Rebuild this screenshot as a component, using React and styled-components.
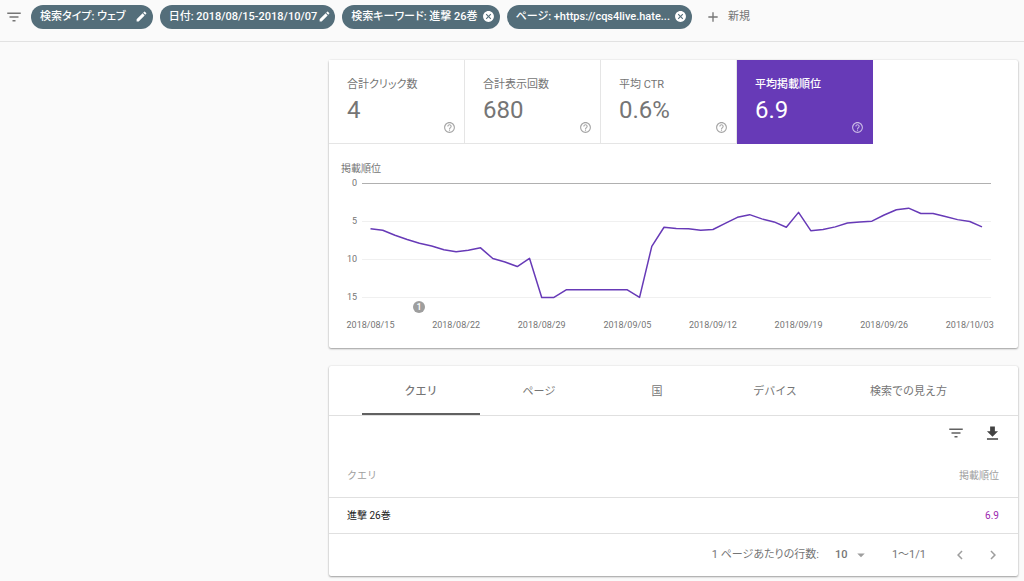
import { useState } from 'react';
import styled, { createGlobalStyle } from 'styled-components';
import {
  MdAdd,
  MdArrowDropDown,
  MdCancel,
  MdChevronLeft,
  MdChevronRight,
  MdEdit,
  MdFileDownload,
  MdFilterList,
  MdHelpOutline,
} from 'react-icons/md';

const GlobalStyle = createGlobalStyle`
  * {
    box-sizing: border-box;
  }
  body {
    margin: 0;
    background: #fafafa;
    color: #757575;
    font-family: Roboto, 'Noto Sans CJK JP', sans-serif;
    font-size: 11px;
    line-height: 16px;
  }
  button, select {
    padding: 0;
    border: 0;
    background: none;
    color: inherit;
    font: inherit;
    cursor: pointer;
  }
`;
const FilterBar = styled.header`
  display: flex;
  align-items: center;
  gap: 7px;
  height: 42px;
  padding: 0 4px 7px 3px;
  border-bottom: 1px solid #e2e2e2;
`;
const IconButton = styled.button`
  display: grid;
  place-items: center;
  flex: none;
  width: ${({ $size }) => $size || 20}px;
  height: ${({ $size }) => $size || 20}px;
  color: ${({ $color }) => $color || 'inherit'};
`;
const Chip = styled.div`
  display: flex;
  align-items: center;
  gap: ${({ $gap }) => $gap}px;
  height: 24px;
  padding: 0 4px 0 9px;
  border-radius: 12px;
  background: #546e7a;
  color: #fff;
  font-weight: 500;
  font-feature-settings: 'palt';
  white-space: nowrap;

  button {
    margin-bottom: 2px;
  }
`;
const NewButton = styled.button`
  display: flex;
  align-items: center;
  gap: 7px;
  margin-left: 6px;
`;
const Main = styled.main`
  display: grid;
  gap: 18px;
  padding: 18px 6px 5px 329px;
`;
const Card = styled.section`
  min-width: 0;
  background: #fff;
  border-radius: 2px;
  box-shadow: 0 1px 2px rgba(0, 0, 0, 0.35), 0 0 2px rgba(0, 0, 0, 0.12);
`;
const Metrics = styled.div`
  display: flex;
`;
const Metric = styled.div`
  position: relative;
  width: 136px;
  height: 84px;
  padding: 17px 18px 0;
  border-right: 1px solid ${({ $active }) => ($active ? '#673ab7' : '#e5e5e5')};
  border-bottom: 1px solid ${({ $active }) => ($active ? '#673ab7' : '#e5e5e5')};
  background: ${({ $active }) => ($active ? '#673ab7' : '#fff')};
  color: ${({ $active }) => ($active ? '#fff' : '#757575')};
  font-weight: ${({ $active }) => ($active ? 500 : 400)};
  font-feature-settings: 'palt';
`;
const MetricValue = styled.div`
  margin-top: 2px;
  font-size: 24px;
  font-weight: 400;
  line-height: 30px;
`;
const HelpButton = styled.button`
  position: absolute;
  right: 8px;
  bottom: 9px;
  display: flex;
  opacity: 0.65;
`;
const ChartSvg = styled.svg`
  display: block;
  width: 100%;
  font-size: 9px;
  fill: #757575;
`;
const Tabs = styled.div`
  display: flex;
  height: 50px;
  padding-left: 33px;
  border-bottom: 1px solid #e0e0e0;
`;
const Tab = styled.button`
  min-width: 118px;
  padding: 4px 36px 0;
  border-bottom: 2px solid ${({ $active }) => ($active ? '#616161' : 'transparent')};
  font-weight: ${({ $active }) => ($active ? 500 : 400)};
  white-space: nowrap;
`;
const TableTools = styled.div`
  display: flex;
  justify-content: flex-end;
  gap: 16px;
  padding: 7px 16px 0;
`;
const Table = styled.table`
  width: 100%;
  border-collapse: collapse;
  font-size: 10px;
`;
const HeadCell = styled.th`
  height: 54px;
  padding: 12px 19px 0 18px;
  border-bottom: 1px solid #e0e0e0;
  color: #9e9e9e;
  font-weight: 400;
  text-align: ${({ $align }) => $align || 'left'};
`;
const Cell = styled.td`
  height: 36px;
  padding: 2px 19px 0 18px;
  border-bottom: 1px solid #e0e0e0;
  color: ${({ $color }) => $color || '#212121'};
  text-align: ${({ $align }) => $align || 'left'};
`;
const Pager = styled.footer`
  display: flex;
  align-items: center;
  justify-content: flex-end;
  height: 42px;
  padding-right: 15px;
  font-feature-settings: 'palt';
`;
const PageSize = styled.div`
  display: flex;
  align-items: center;
  margin: 0 22px 0 16px;
  font-weight: 500;

  select {
    width: 32px;
    margin-right: -15px;
    appearance: none;
    outline: none;
  }
  svg {
    pointer-events: none;
  }
`;
const PagerButtons = styled.div`
  display: flex;
  gap: 13px;
  margin-left: 24px;
`;

const chips = [
  { text: '検索タイプ: ウェブ', gap: 9, icon: MdEdit, action: '編集' },
  { text: '日付: 2018/08/15-2018/10/07', gap: 0, icon: MdEdit, action: '編集' },
  { text: '検索キーワード: 進撃 26巻', gap: 4, icon: MdCancel, action: '削除' },
  { text: 'ページ: +https://cqs4live.hate...', gap: 4, icon: MdCancel, action: '削除' },
];
const metrics = [
  { label: '合計クリック数', value: '4' },
  { label: '合計表示回数', value: '680' },
  { label: '平均 CTR', value: '0.6%' },
  { label: '平均掲載順位', value: '6.9', active: true },
];
const tabs = ['クエリ', 'ページ', '国', 'デバイス', '検索での見え方'];
const dates = [
  '2018/08/15',
  '2018/08/22',
  '2018/08/29',
  '2018/09/05',
  '2018/09/12',
  '2018/09/19',
  '2018/09/26',
  '2018/10/03',
];
// average position for each day from 2018/08/15
const positions = [
  6, 6.2, 6.85, 7.4, 7.9, 8.25, 8.75, 9, 8.8, 8.5, 9.9, 10.35, 10.95, 9.87, 15, 15, 14, 14, 14, 14,
  14, 14, 15, 8.3, 5.8, 5.95, 6, 6.2, 6.1, 5.3, 4.5, 4.15, 4.7, 5.1, 5.8, 3.85, 6.25, 6.1, 5.75,
  5.25, 5.1, 5, 4.2, 3.5, 3.3, 4, 4, 4.4, 4.8, 5.05, 5.75,
];
const xAt = day => 41.5 + day * 12.23;
const yAt = value => 39 + value * 7.63;

function Chart() {
  return (
    <ChartSvg viewBox='0 0 689 204' role='img' aria-label='掲載順位'>
      <text x='12' y='28' fontSize='10'>
        掲載順位
      </text>
      {[0, 5, 10, 15].map(tick => (
        <g key={tick}>
          <rect
            x='33'
            y={Math.floor(yAt(tick))}
            width='629'
            height='1'
            fill={tick ? '#f0f0f0' : '#b0b0b0'}
          />
          <text x='28' y={Math.floor(yAt(tick)) + 3} textAnchor='end'>
            {tick}
          </text>
        </g>
      ))}
      <polyline
        points={positions.map((value, day) => `${xAt(day)},${yAt(value)}`).join(' ')}
        fill='none'
        stroke='#673ab7'
        strokeWidth='1.5'
        strokeLinejoin='round'
      />
      <circle cx='90' cy='163' r='6' fill='#9e9e9e' />
      <text x='90' y='166' textAnchor='middle' fill='#fff' fontWeight='500'>
        1
      </text>
      {dates.map((date, week) => (
        <text key={date} x={xAt(week * 7)} y='184' textAnchor='middle'>
          {date}
        </text>
      ))}
    </ChartSvg>
  );
}

export default function App() {
  const [activeTab, setActiveTab] = useState(tabs[0]);

  return (
    <>
      <GlobalStyle />
      <FilterBar>
        <IconButton aria-label='フィルタ' $size={21}>
          <MdFilterList size={18} />
        </IconButton>
        {chips.map(({ text, gap, icon: Icon, action }) => (
          <Chip key={text} $gap={gap}>
            <span>{text}</span>
            <IconButton $size={14} aria-label={action}>
              <Icon size={13} />
            </IconButton>
          </Chip>
        ))}
        <NewButton>
          <MdAdd size={16} />
          新規
        </NewButton>
      </FilterBar>
      <Main>
        <Card>
          <Metrics>
            {metrics.map(({ label, value, active }) => (
              <Metric key={label} $active={active}>
                <div>{label}</div>
                <MetricValue>{value}</MetricValue>
                <HelpButton aria-label={`${label} ヘルプ`}>
                  <MdHelpOutline size={13} />
                </HelpButton>
              </Metric>
            ))}
          </Metrics>
          <Chart />
        </Card>
        <Card>
          <Tabs role='tablist'>
            {tabs.map(tab => (
              <Tab
                key={tab}
                role='tab'
                aria-selected={tab === activeTab}
                $active={tab === activeTab}
                onClick={() => setActiveTab(tab)}
              >
                {tab}
              </Tab>
            ))}
          </Tabs>
          <TableTools>
            <IconButton $color='#616161' aria-label='行をフィルタ'>
              <MdFilterList size={18} />
            </IconButton>
            <IconButton $color='#424242' aria-label='ダウンロード'>
              <MdFileDownload size={19} />
            </IconButton>
          </TableTools>
          <Table>
            <thead>
              <tr>
                <HeadCell>クエリ</HeadCell>
                <HeadCell $align='right'>掲載順位</HeadCell>
              </tr>
            </thead>
            <tbody>
              <tr>
                <Cell>進撃 26巻</Cell>
                <Cell $align='right' $color='#9c27b0'>
                  6.9
                </Cell>
              </tr>
            </tbody>
          </Table>
          <Pager>
            <label htmlFor='page-size'>1 ページあたりの行数:</label>
            <PageSize>
              <select id='page-size' defaultValue='10'>
                <option>10</option>
                <option>25</option>
                <option>50</option>
              </select>
              <MdArrowDropDown size={18} color='#9e9e9e' />
            </PageSize>
            <span>1～1/1</span>
            <PagerButtons>
              <IconButton $color='#9e9e9e' aria-label='前のページ'>
                <MdChevronLeft size={18} />
              </IconButton>
              <IconButton $color='#9e9e9e' aria-label='次のページ'>
                <MdChevronRight size={18} />
              </IconButton>
            </PagerButtons>
          </Pager>
        </Card>
      </Main>
    </>
  );
}
